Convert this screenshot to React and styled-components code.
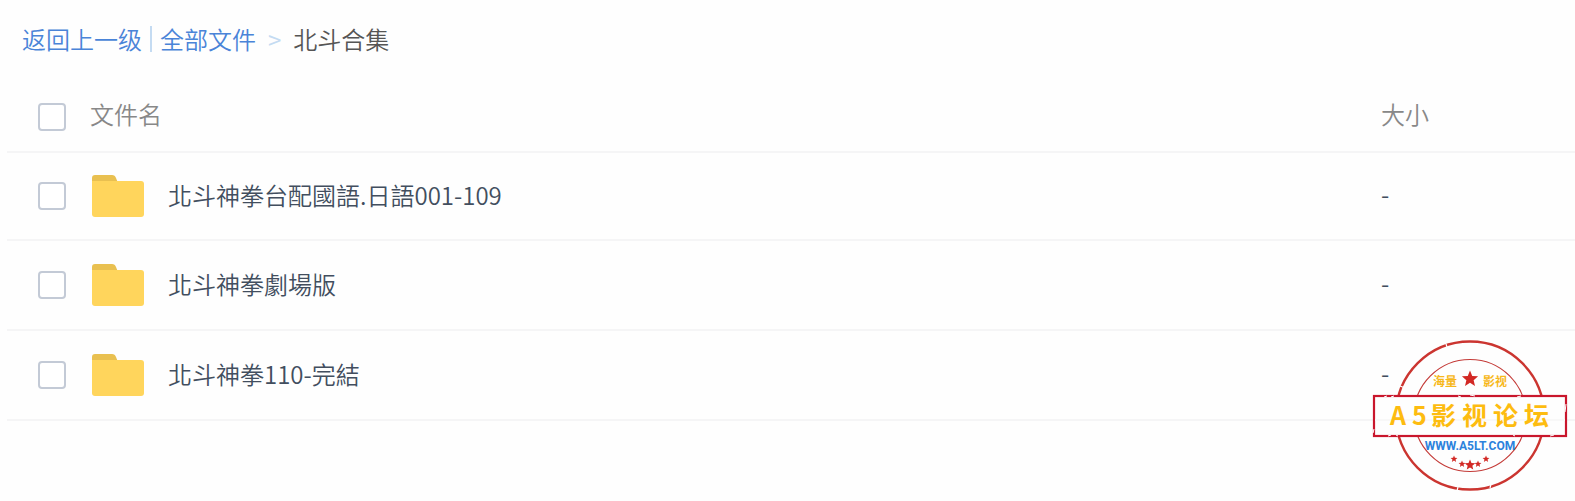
import styled, { createGlobalStyle } from "styled-components";

const GlobalStyle = createGlobalStyle`
	* {
		box-sizing: border-box;
	}
	body {
		margin: 0;
		background: #fefefe;
		color: #424e5e;
		font-family: "Noto Sans CJK SC", sans-serif;
		font-size: 24px;
		font-weight: 350;
		line-height: 36px;
	}
`;

const Page = styled.main`
	min-height: 100vh;
	padding: 21px 0 0 7px;
`;

const Breadcrumb = styled.nav`
	display: flex;
	align-items: center;
	padding: 0 15px;
	margin-bottom: 22px;

	a {
		color: #4a84d8;
		text-decoration: none;
	}
	.divider {
		width: 2px;
		height: 26px;
		margin: 0 8px;
		background: #c4dbf2;
	}
	.arrow {
		margin: 0 12px;
		color: #c4dbf2;
		font-weight: 400;
	}
	.current {
		color: #555;
	}
`;

const TableWrap = styled.div`
	position: relative;
`;

const FileTable = styled.table`
	width: 100%;
	table-layout: fixed;
	border-collapse: collapse;
	text-align: left;

	th,
	td {
		padding: 0;
		border-bottom: 2px solid #f5f5f6;
		font-weight: inherit;
	}
	th {
		height: 73px;
		color: #888;
	}
	td {
		height: 90px;
	}
	tbody tr:first-child td {
		height: 88px;
	}
	.check {
		width: 83px;
		padding-top: 4px;
	}
	.name {
		padding-bottom: 2px;
	}
	.size {
		width: 194px;
		padding-bottom: 2px;
	}
	td.size {
		padding-bottom: 4px;
	}
`;

const Checkbox = styled.input`
	appearance: none;
	display: block;
	width: 28px;
	height: 28px;
	margin: 0 0 0 31px;
	border: 2px solid #c3cad6;
	border-radius: 4px;
	background: #fff;

	&:checked {
		background: #4a84d8;
	}
`;

const FileName = styled.label`
	display: flex;
	align-items: center;
	gap: 24px;
	padding-left: 2px;

	span {
		padding-bottom: 2px;
	}
`;

const StampStyled = styled.svg`
	position: absolute;
	right: 7px;
	bottom: -71px;
	font-family: "Noto Sans CJK SC", sans-serif;
	font-weight: 700;
`;

const files = [
	{ name: "北斗神拳台配國語.日語001-109", lang: "zh-TW", size: "-" },
	{ name: "北斗神拳劇場版", lang: "zh-TW", size: "-" },
	{ name: "北斗神拳110-完結", lang: "zh-TW", size: "-" },
];

const stars = [
	{ x: 82, y: 119, r: 3.6 },
	{ x: 90, y: 124, r: 3.6 },
	{ x: 98, y: 125, r: 5.5 },
	{ x: 106, y: 124, r: 3.6 },
	{ x: 114, y: 119, r: 3.6 },
];

function Folder() {
	return (
		<svg width="52" height="42" viewBox="0 0 52 42" aria-hidden="true">
			<path d="M0 12V3q0-3 3-3h17q3 0 4 3l2 5v4z" fill="#e9c050" />
			<path d="M0 6h49q3 0 3 3v30q0 3-3 3H3q-3 0-3-3z" fill="#ffd55c" />
		</svg>
	);
}

function Star({ x, y, r }) {
	const points = Array.from({ length: 10 }, (_, i) => {
		const angle = (Math.PI * i) / 5 - Math.PI / 2;
		const radius = i % 2 ? r * 0.45 : r;
		return `${x + radius * Math.cos(angle)},${y + radius * Math.sin(angle)}`;
	}).join(" ");
	return <polygon points={points} fill="#d22824" />;
}

function Stamp() {
	return (
		<StampStyled width="196" height="152" viewBox="0 0 196 152">
			<circle cx="98" cy="75.5" r="74" fill="none" stroke="#cb3530" strokeWidth="2.4" />
			<circle cx="98" cy="75.5" r="56" fill="none" stroke="#c43b38" strokeWidth="1.2" />
			<path d="M74 4l1 3M28 46l5 2M118 148l1-4M85 151l1-4" stroke="#fefefe" strokeWidth="1.2" />
			<rect x="2" y="56" width="192" height="40" fill="#fefefe" stroke="#c9162c" strokeWidth="2.2" />
			<path d="M12 57l3-1M19 57l3-1M86 56l3 1M98 55l5 1M145 57l4-1M194 64l-1 8M16 96l3-1M24 95l2 1M141 95l2 1M178 96l4-1M2 89l-1 4" stroke="#fefefe" strokeWidth="1" />
			<path d="M3 80h190" stroke="#f8f8f8" strokeWidth="2" />
			<g fill="#f7b81b" fontSize="12">
				<text x="61" y="46">海量</text>
				<text x="111" y="46">影视</text>
			</g>
			<Star x={98} y={39} r={8.5} />
			<text x={[18, 40, 59, 90, 121, 152]} y="85" fontSize="25" fill="#fdbc10">
				A5影视论坛
			</text>
			<text x="98" y="110" fontSize="12" fill="#2c82dc" textAnchor="middle" fontFamily="Roboto, sans-serif">
				WWW.A5LT.COM
			</text>
			{stars.map((star) => (
				<Star key={star.x} {...star} />
			))}
		</StampStyled>
	);
}

function App() {
	return (
		<>
			<GlobalStyle />
			<Page lang="zh-CN">
				<Breadcrumb>
					<a href="#back">返回上一级</a>
					<span className="divider" />
					<a href="#all">全部文件</a>
					<span className="arrow">&gt;</span>
					<span className="current">北斗合集</span>
				</Breadcrumb>
				<TableWrap>
					<FileTable>
						<thead>
							<tr>
								<th className="check">
									<Checkbox type="checkbox" id="all-files" />
								</th>
								<th className="name">
									<label htmlFor="all-files">文件名</label>
								</th>
								<th className="size">大小</th>
							</tr>
						</thead>
						<tbody>
							{files.map((file, index) => (
								<tr key={file.name}>
									<td>
										<Checkbox type="checkbox" id={`file-${index}`} />
									</td>
									<td>
										<FileName htmlFor={`file-${index}`}>
											<Folder />
											<span lang={file.lang}>{file.name}</span>
										</FileName>
									</td>
									<td className="size">{file.size}</td>
								</tr>
							))}
						</tbody>
					</FileTable>
					<Stamp />
				</TableWrap>
			</Page>
		</>
	);
}

export default App;
